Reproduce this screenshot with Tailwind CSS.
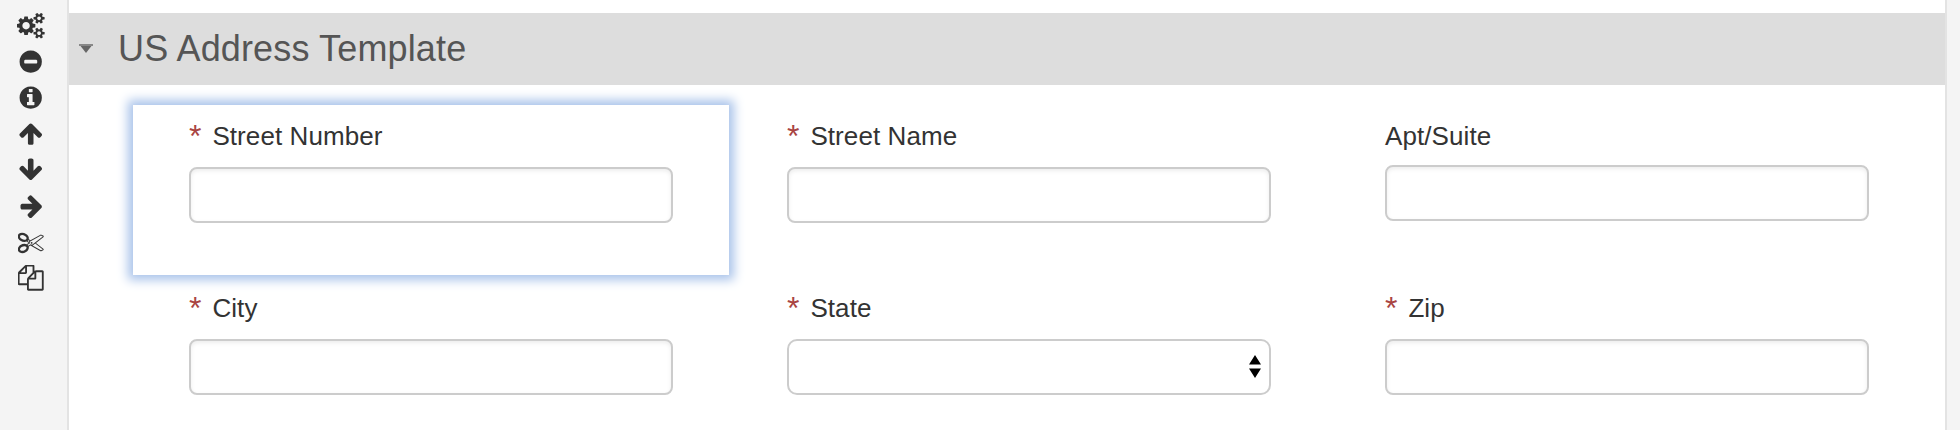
<!DOCTYPE html>
<html lang="en">
<head>
<meta charset="utf-8">
<title>US Address Template</title>
<script src="https://cdn.jsdelivr.net/npm/@tailwindcss/browser@4"></script>
</head>
<body class="flex h-[430px] w-[1960px] overflow-hidden bg-[#f4f4f4] font-['Liberation_Sans',Arial,sans-serif] text-[26px] tracking-[0.080px] text-[#333]">
<aside class="flex w-[69px] shrink-0 flex-col gap-[10px] border-r-2 border-[#e3e3e3] pt-[13px] pl-[18px] text-[#333]">
  <svg class="-ml-[1px] h-[26px] w-[28px] shrink-0" viewBox="20 20 1920 1792" fill="currentColor"><path d="M896 896q0-106-75-181t-181-75-181 75-75 181 75 181 181 75 181-75 75-181zm768 512q0-52-38-90t-90-38-90 38-38 90q0 53 37.500 90.500t90.500 37.500 90.500-37.500 37.500-90.500zm0-1024q0-52-38-90t-90-38-90 38-38 90q0 53 37.500 90.500t90.500 37.500 90.500-37.500 37.500-90.500zm-384 421v185q0 10-7 19.500t-16 10.500l-155 24q-11 35-32 76 34 48 90 115 7 11 7 20 0 12-7 19-23 30-82.500 89.500t-78.500 59.500q-11 0-21-7l-115-90q-37 19-77 31-11 108-23 155-7 24-30 24h-186q-11 0-20-7.500t-10-17.500l-23-153q-34-10-75-31l-118 89q-7 7-20 7-11 0-21-8-144-133-144-160 0-9 7-19 10-14 41-53t47-61q-23-44-35-82l-152-24q-10-1-17-9.500t-7-19.500v-185q0-10 7-19.500t16-10.500l155-24q11-35 32-76-34-48-90-115-7-11-7-20 0-12 7-20 22-30 82-89t79-59q11 0 21 7l115 90q34-18 77-32 11-108 23-154 7-24 30-24h186q11 0 20 7.500t10 17.500l23 153q34 10 75 31l118-89q8-7 20-7 11 0 21 8 144 133 144 160 0 8-7 19-12 16-42 54t-45 60q23 48 34 82l152 23q10 2 17 10.500t7 19.500zm640 533v140q0 16-149 31-12 27-30 52 51 113 51 138 0 4-4 7-122 71-124 71-8 0-46-47t-52-68q-20 2-30 2t-30-2q-14 21-52 68t-46 47q-2 0-124-71-4-3-4-7 0-25 51-138-18-25-30-52-149-15-149-31v-140q0-16 149-31 13-29 30-52-51-113-51-138 0-4 4-7 4-2 35-20t59-34 30-16q8 0 46 46.500t52 67.500q20-2 30-2t30 2q51-71 92-112l6-2q4 0 124 70 4 3 4 7 0 25-51 138 17 23 30 52 149 15 149 31zm0-1024v140q0 16-149 31-12 27-30 52 51 113 51 138 0 4-4 7-122 71-124 71-8 0-46-47t-52-68q-20 2-30 2t-30-2q-14 21-52 68t-46 47q-2 0-124-71-4-3-4-7 0-25 51-138-18-25-30-52-149-15-149-31v-140q0-16 149-31 13-29 30-52-51-113-51-138 0-4 4-7 4-2 35-20t59-34 30-16q8 0 46 46.500t52 67.500q20-2 30-2t30 2q51-71 92-112l6-2q4 0 124 70 4 3 4 7 0 25-51 138 17 23 30 52 149 15 149 31z"/></svg>
  <svg class="size-[26px] shrink-0" viewBox="20 20 1792 1792" fill="currentColor"><path d="M1344 960v-128q0-26-19-45t-45-19h-768q-26 0-45 19t-19 45v128q0 26 19 45t45 19h768q26 0 45-19t19-45zm320-64q0 209-103 385.500t-279.500 279.500-385.500 103-385.500-103-279.500-279.500-103-385.500 103-385.500 279.500-279.500 385.500-103 385.500 103 279.500 279.500 103 385.500z"/></svg>
  <svg class="size-[26px] shrink-0" viewBox="20 20 1792 1792" fill="currentColor"><path d="M1152 1376v-160q0-14-9-23t-23-9h-96v-512q0-14-9-23t-23-9h-320q-14 0-23 9t-9 23v160q0 14 9 23t23 9h96v320h-96q-14 0-23 9t-9 23v160q0 14 9 23t23 9h448q14 0 23-9t9-23zm-128-896v-160q0-14-9-23t-23-9h-192q-14 0-23 9t-9 23v160q0 14 9 23t23 9h192q14 0 23-9t9-23zm640 416q0 209-103 385.500t-279.500 279.500-385.500 103-385.500-103-279.500-279.500-103-385.500 103-385.500 279.500-279.500 385.500-103 385.500 103 279.500 279.500 103 385.500z"/></svg>
  <svg class="size-[26px] shrink-0" viewBox="20 20 1792 1792" fill="currentColor"><path d="M1675 971q0 51-37 90l-75 75q-38 38-91 38-54 0-90-38l-294-293v704q0 52-37.500 84.500t-90.500 32.500h-128q-53 0-90.500-32.500t-37.500-84.500v-704l-294 293q-36 38-90 38t-90-38l-75-75q-38-38-38-90 0-53 38-91l651-651q35-37 90-37 54 0 91 37l651 651q37 39 37 91z"/></svg>
  <svg class="size-[26px] shrink-0" viewBox="20 20 1792 1792" fill="currentColor"><path d="M1675 832q0 53-37 90l-651 652q-39 37-91 37-53 0-90-37l-651-652q-38-36-38-90 0-53 38-91l74-75q39-37 91-37 53 0 90 37l294 294v-704q0-52 38-90t90-38h128q52 0 90 38t38 90v704l294-294q37-37 90-37 52 0 91 37l75 75q37 39 37 91z"/></svg>
  <svg class="size-[26px] shrink-0" viewBox="20 20 1792 1792" fill="currentColor"><path d="M1664 960q0 54-37 91l-651 651q-39 37-91 37-51 0-90-37l-75-75q-38-38-38-91t38-91l293-293h-704q-52 0-84.500-37.500t-32.500-90.500v-128q0-53 32.500-90.500t84.500-37.500h704l-293-294q-38-36-38-90t38-90l75-75q38-38 90-38 53 0 91 38l651 651q37 35 37 90z"/></svg>
  <svg class="size-[26px] shrink-0" viewBox="20 0 1792 1792" fill="currentColor"><path d="M960 896q26 0 45 19t19 45-19 45-45 19-45-19-19-45 19-45 45-19zm300 64l507 398q28 20 25 56-5 35-35 51l-128 64q-13 7-29 7-17 0-31-8l-690-387-110 66q-8 4-12 5 14 49 10 97-7 77-56 147.500t-132 123.500q-132 84-277 84-136 0-222-78-90-84-79-207 7-76 56-147t131-124q132-84 278-84 83 0 151 31 9-13 22-22l122-73-122-73q-13-9-22-22-68 31-151 31-146 0-278-84-82-53-131-124t-56-147q-5-59 15.500-113t63.500-93q85-79 222-79 145 0 277 84 83 52 132 123t56 148q4 48-10 97 4 1 12 5l110 66 690-387q14-8 31-8 16 0 29 7l128 64q30 16 35 51 3 36-25 56zm-681-260q46-42 21-108t-106-117q-92-59-192-59-74 0-113 36-46 42-21 108t106 117q92 59 192 59 74 0 113-36zm-85 745q81-51 106-117t-21-108q-39-36-113-36-100 0-192 59-81 51-106 117t21 108q39 36 113 36 100 0 192-59zm178-613l96 58v-11q0-36 33-56l14-8-79-44-26 26q-3 3-10 11t-12 12q-2 2-4 3.500t-3 2.500zm224 224l96 32 736-576-128-64-768 431v113l-160 96 9 8q2 2 7 6 4 4 11 12t11 12l26 26zm704 416l128-64-520-408-177 138q-2 3-13 7z"/></svg>
  <svg class="size-[26px] shrink-0" viewBox="20 20 1792 1792" fill="currentColor"><path d="M1696 384q40 0 68 28t28 68v1216q0 40-28 68t-68 28h-960q-40 0-68-28t-28-68v-288h-544q-40 0-68-28t-28-68v-672q0-40 20-88t48-76l408-408q28-28 76-48t88-20h416q40 0 68 28t28 68v328q68-40 128-40h416zm-544 213l-299 299h299v-299zm-640-384l-299 299h299v-299zm196 647l316-316v-416h-384v416q0 40-28 68t-68 28h-416v640h512v-256q0-40 20-88t48-76zm956 804v-1152h-384v416q0 40-28 68t-68 28h-416v640h896z"/></svg>
</aside>
<main class="w-[1878px] shrink-0 border-r-2 border-[#e3e3e3] bg-white pt-[13px]">
  <header class="flex h-[72px] items-center bg-[#ddd] pl-[10px]">
    <svg class="mb-[1px] h-[9px] w-[14px]" viewBox="0 0 14 9"><path d="M0 0h14L7 9z" fill="#666"/><path d="M0 0h14v2H0z" fill="#888"/></svg>
    <h1 class="ml-[25px] text-[36px] leading-[72px] tracking-[0.150px] text-[#555]">US Address Template</h1>
  </header>
  <form class="mt-5 ml-16 grid grid-cols-[596px_596px_596px] auto-rows-[170px] gap-[2px]">
    <div class="px-14 pt-[11px] shadow-[0_0_10px_5px_#a9c3ea]">
      <label class="flex h-10 leading-10"><span class="w-[23.400px] text-[32px] text-[#a94442]">*</span>Street Number</label>
      <input class="mt-[11px] block h-14 w-full rounded-lg border-2 border-[#ccc] bg-white shadow-[inset_0_2px_4px_rgba(0,0,0,0.075)]">
    </div>
    <div class="px-14 pt-[11px]">
      <label class="flex h-10 leading-10"><span class="w-[23.400px] text-[32px] text-[#a94442]">*</span>Street Name</label>
      <input class="mt-[11px] block h-14 w-full rounded-lg border-2 border-[#ccc] bg-white shadow-[inset_0_2px_4px_rgba(0,0,0,0.075)]">
    </div>
    <div class="px-14 pt-[11px]">
      <label class="flex h-10 leading-10">Apt/Suite</label>
      <input class="mt-[9px] block h-14 w-full rounded-lg border-2 border-[#ccc] bg-white shadow-[inset_0_2px_4px_rgba(0,0,0,0.075)]">
    </div>
    <div class="px-14 pt-[11px]">
      <label class="flex h-10 leading-10"><span class="w-[23.400px] text-[32px] text-[#a94442]">*</span>City</label>
      <input class="mt-[11px] block h-14 w-full rounded-lg border-2 border-[#ccc] bg-white shadow-[inset_0_2px_4px_rgba(0,0,0,0.075)]">
    </div>
    <div class="px-14 pt-[11px]">
      <label class="flex h-10 leading-10"><span class="w-[23.400px] text-[32px] text-[#a94442]">*</span>State</label>
      <div class="mt-[11px] flex h-14 items-center justify-end rounded-[10px] border-2 border-[#ccc] bg-white pr-2">
        <svg class="mb-[1px] h-[23px] w-3" viewBox="0 0 12 23"><path d="M6 0l6 9.500H0zM0 13.500h12L6 23z"/></svg>
      </div>
    </div>
    <div class="px-14 pt-[11px]">
      <label class="flex h-10 leading-10"><span class="w-[23.400px] text-[32px] text-[#a94442]">*</span>Zip</label>
      <input class="mt-[11px] block h-14 w-full rounded-lg border-2 border-[#ccc] bg-white shadow-[inset_0_2px_4px_rgba(0,0,0,0.075)]">
    </div>
  </form>
</main>
</body>
</html>
